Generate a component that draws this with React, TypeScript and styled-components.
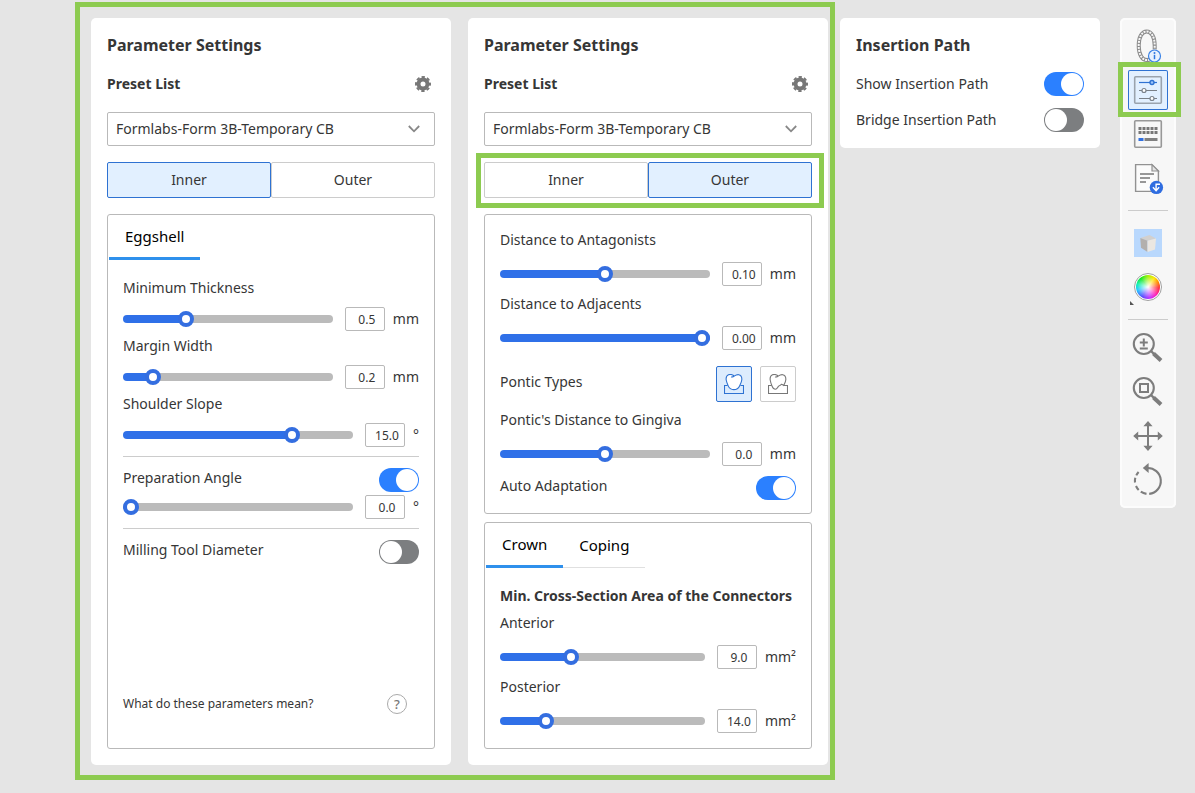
import React, { useId, useState } from "react";
import styled, { createGlobalStyle, css } from "styled-components";

const color = {
  page: "#e5e5e5",
  text: "#363636",
  border: "#b9b9b9",
  softBorder: "#cccccc",
  blue: "#2e72d2",
  fill: "#2f70e8",
  toggle: "#2b80ff",
  tab: "#2f90ec",
  tint: "#e2f0ff",
  mark: "#8dcb50",
  icon: "#7d7d7d",
};

const GlobalStyle = createGlobalStyle`
  *, *::before, *::after { box-sizing: border-box; }
  body {
    margin: 0;
    background: ${color.page};
    color: ${color.text};
    font-family: "Noto Sans", "Open Sans", sans-serif;
    font-size: 14px;
    line-height: 22px;
  }
  button, input, select { font: inherit; color: inherit; margin: 0; }
`;

const Page = styled.main`
  display: flex;
  align-items: flex-start;
  padding: 2px 19px 13px 75px;
`;

const Frame = styled.section`
  flex: 1;
  display: flex;
  gap: 17px;
  padding: 11px 2px 10px 11px;
  border: 5px solid ${color.mark};
`;

const Card = styled.section`
  display: flex;
  flex-direction: column;
  gap: 16px;
  padding: 16px;
  border-radius: 5px;
  background: #fff;
`;

const Panel = styled(Card)`
  flex: 1;
  min-width: 0;
`;

const PathCard = styled(Card)`
  width: 260px;
  margin: 16px 20px 0 5px;
`;

const Title = styled.h2`
  margin: 0;
  font-size: 16px;
  font-weight: 700;
`;

const Subtitle = styled.h3`
  margin: 0;
  font-size: 14px;
  font-weight: 700;
`;

const PresetRow = styled.div`
  display: flex;
  align-items: center;
  justify-content: space-between;
  height: 24px;
`;

const IconButton = styled.button`
  display: grid;
  place-items: center;
  width: 24px;
  height: 24px;
  padding: 0;
  border: 0;
  background: none;
`;

const SelectWrap = styled.div`
  display: grid;
  align-items: center;
  svg {
    grid-area: 1 / 1;
    justify-self: end;
    margin-right: 15px;
    pointer-events: none;
  }
`;

const Select = styled.select`
  grid-area: 1 / 1;
  appearance: none;
  width: 100%;
  height: 34px;
  padding: 0 32px 0 8px;
  border: 1px solid ${color.border};
  border-radius: 2px;
  background: #fff;
`;

const Segments = styled.div`
  position: relative;
  display: flex;
`;

const Segment = styled.button<{ $active: boolean }>`
  flex: 1;
  height: 36px;
  border: 1px solid ${(p) => (p.$active ? color.blue : color.softBorder)};
  border-radius: 2px;
  background: ${(p) => (p.$active ? color.tint : "#fff")};
`;

const Mark = styled.span<{ $inset: string }>`
  position: absolute;
  inset: ${(p) => p.$inset};
  border: 5px solid ${color.mark};
  pointer-events: none;
`;

const Boxes = styled.div`
  flex: 1;
  display: flex;
  flex-direction: column;
  gap: 8px;
`;

const Box = styled.div<{ $grow?: boolean }>`
  display: flex;
  flex-direction: column;
  flex: ${(p) => (p.$grow ? 1 : "none")};
  padding: 1px;
  border: 1px solid ${color.border};
  border-radius: 3px;
`;

const Tabs = styled.div`
  display: flex;
  height: 44px;
`;

const Tab = styled.button<{ $active?: boolean }>`
  padding: 0 16px 2px;
  border: 0;
  border-bottom: ${(p) => (p.$active ? `3px solid ${color.tab}` : "1px solid #e0e0e0")};
  background: none;
  color: #000;
  font-size: 15px;
`;

const Body = styled.div<{ $pad: string }>`
  flex: 1;
  display: flex;
  flex-direction: column;
  padding: ${(p) => p.$pad};
`;

const FieldList = styled.div<{ $loose?: boolean }>`
  display: flex;
  flex-direction: column;
  gap: ${(p) => (p.$loose ? 7 : 4)}px;
  > div { gap: ${(p) => (p.$loose ? 11 : 8)}px; }
`;

const FieldGroup = styled.div`
  display: flex;
  flex-direction: column;
`;

const Section = styled.div`
  display: flex;
  flex-direction: column;
  gap: 3px;
  padding: 11px 0 9px;
  border-top: 1px solid ${color.softBorder};
  &:first-of-type { margin-top: 9px; }
`;

const SliderRow = styled.div`
  display: flex;
  align-items: center;
  height: 24px;
`;

const Range = styled.input`
  appearance: none;
  flex: 1;
  min-width: 0;
  height: 16px;
  margin-right: 12px;
  background: none;
  &::-webkit-slider-runnable-track {
    height: 8px;
    border-radius: 4px;
    background: linear-gradient(${color.fill}, ${color.fill}) left / var(--filled) 100% no-repeat #bbbbbb;
  }
  &::-webkit-slider-thumb {
    appearance: none;
    width: 16px;
    height: 16px;
    margin-top: -4px;
    border: 4px solid #346ee0;
    border-radius: 50%;
    background: #fff;
  }
`;

const NumberBox = styled.input`
  width: 40px;
  height: 24px;
  margin-right: 8px;
  padding: 1px 0 0 4px;
  border: 1px solid ${color.border};
  border-radius: 2px;
  background: #fff;
  font-size: 12px;
  text-align: center;
`;

const ControlRow = styled.div<{ $plain?: boolean }>`
  display: flex;
  align-items: center;
  justify-content: space-between;
  ${(p) => !p.$plain && css`
    > :first-child { padding-bottom: 4px; margin: -2px 0; }
  `}
`;

const Rows = styled.div`
  display: flex;
  flex-direction: column;
  gap: 12px;
`;

const Switch = styled.input`
  appearance: none;
  display: flex;
  width: 40px;
  height: 24px;
  padding: 1px;
  border-radius: 12px;
  background: #7c7e80;
  &::before {
    content: "";
    width: 22px;
    height: 22px;
    border-radius: 50%;
    background: #fff;
  }
  &:checked { justify-content: flex-end; background: ${color.toggle}; }
`;

const Choices = styled.div`
  display: flex;
  gap: 8px;
`;

const Choice = styled.button<{ $active?: boolean }>`
  display: grid;
  place-items: center;
  width: 36px;
  height: 36px;
  padding: 0;
  border: 1px solid ${(p) => (p.$active ? color.blue : color.softBorder)};
  border-radius: 2px;
  background: ${(p) => (p.$active ? "#ddecfd" : "#fff")};
  color: ${(p) => (p.$active ? color.blue : "#777")};
`;

const PonticRow = styled(ControlRow)`
  margin: 16px 0 7px;
`;

const AutoRow = styled(ControlRow)`
  margin-top: 10px;
`;

const HelpRow = styled.div`
  display: flex;
  align-items: center;
  justify-content: space-between;
  margin-top: auto;
  padding-right: 12px;
  font-size: 12px;
`;

const HelpButton = styled.button`
  width: 20px;
  height: 20px;
  padding: 0;
  border: 1px solid #aaaaaa;
  border-radius: 50%;
  background: #fff;
  color: #777;
  font-size: 13px;
  font-weight: 500;
  line-height: 18px;
`;

const Toolbar = styled.nav`
  display: flex;
  flex-direction: column;
  gap: 4px;
  width: 56px;
  margin-top: 16px;
  padding: 8px 8px 9px;
  border-radius: 5px;
  background: #f7f7f7;
  box-shadow: inset 0 0 0 2px #fcfcfc;
`;

const Tool = styled.button<{ $active?: boolean }>`
  position: relative;
  display: grid;
  place-items: center;
  width: 40px;
  height: 40px;
  padding: 0;
  border: 0;
  border-radius: 2px;
  background: ${(p) => (p.$active ? "#e2f0ff" : "none")};
  box-shadow: ${(p) => (p.$active ? `inset 0 0 0 1px ${color.blue}` : "none")};
`;

const Rule = styled.hr<{ $tight?: boolean }>`
  width: 40px;
  height: 1px;
  margin: 8px 0 ${(p) => (p.$tight ? 3 : 8)}px;
  border: 0;
  background: #cccccc;
`;

const Wheel = styled.span`
  width: 28px;
  height: 28px;
  border: 1px solid #a0a0a0;
  border-radius: 50%;
  padding: 1px;
  background:
    radial-gradient(circle, #fff 0, #ffffff00 66%) content-box,
    conic-gradient(#a4f000, #ffe600 35deg, #ff8a00 65deg, #ff2a3c 95deg, #ff20b8 135deg, #c030ff 170deg, #5a4cff 210deg, #20c8ff 255deg, #10f0b0 285deg, #10e820 320deg, #a4f000) content-box,
    #fff;
`;

const Corner = styled.span`
  position: absolute;
  left: 2px;
  bottom: 2px;
  border: 2px solid transparent;
  border-left-color: #555;
  border-bottom-color: #555;
`;

function Gear() {
  return (
    <svg width="16" height="16" viewBox="0 0 16 16" fill="none" stroke="#777" aria-hidden="true">
      <circle cx="8" cy="8" r="4.5" strokeWidth="4" />
      <circle cx="8" cy="8" r="7" strokeWidth="2" strokeDasharray="3.3 2.2" strokeDashoffset="1.65" />
    </svg>
  );
}

function Chevron() {
  return (
    <svg width="12" height="8" viewBox="0 0 12 8" fill="none" stroke="#888" strokeWidth="1.8" aria-hidden="true">
      <path d="M.8 1 6 6.3 11.2 1" />
    </svg>
  );
}

function ToothOnGum() {
  return (
    <svg width="20" height="20" viewBox="0 0 20 20" fill="none" stroke="currentColor" strokeWidth="1.1" aria-hidden="true">
      <path d="M3.6 11.5H.5v8h19v-8h-3.1" />
      <path
        fill="#fff"
        d="M10 1.8C8.300.6 6 .2 4.500.7 2.400 1.500 1.900 3.800 2.200 6c.4 2.300 1.200 4 2 5.900 1 2.400 2.800 3.700 5.600 3.700s4.700-1.300 5.800-3.700c.9-2 2-3.900 2.200-6.200C18 3 16.800 1.100 14.700.7c-2-.3-3.300.6-4.700 1.500C9 2.900 8 3.200 7 3"
      />
    </svg>
  );
}

function ToothInGum() {
  return (
    <svg width="20" height="20" viewBox="0 0 20 20" fill="none" stroke="currentColor" strokeWidth="1.1" aria-hidden="true">
      <path d="M3.800 11.500H.5v8h19v-8h-3.700" />
      <path d="M10 1.800C8.300.6 6 .2 4.500.7 2.400 1.500 1.900 3.800 2.200 6c.4 2.300 1 4.300 1.900 6.300.7 1.700 1.700 2.900 3.300 2.900 1.800 0 2-1.700 3-2.900 1-1.100 2.300-.6 3-2 .7-.2 1.200.4 2.300 1.200.9-2 1.900-3.600 2.100-5.800C18 3 16.800 1.100 14.700.7c-2-.3-3.300.6-4.700 1.500C9 2.900 8 3.200 7 3" />
    </svg>
  );
}

const archPath = "M22 33.500C13.500 36.500 10.700 27 10.700 19.500 10.700 11 14 5.500 18.700 5.500S26.700 11 26.700 19.500v4";

function ArchIcon() {
  return (
    <svg width="40" height="40" viewBox="0 0 40 40" fill="none" aria-hidden="true">
      <path d={archPath} stroke="#8b8b8b" strokeWidth="4" />
      <path d={archPath} stroke="#f7f7f7" strokeWidth="2" strokeDasharray="2 1" />
      <circle cx="26.5" cy="30" r="6" fill="#e8f2fe" stroke="#3b83e6" strokeWidth="1.2" />
      <path d="M26.5 28.800v4.400" stroke="#2e78e0" strokeWidth="1.5" />
      <circle cx="26.5" cy="26.900" r="1" fill="#2e78e0" />
    </svg>
  );
}

function SlidersIcon() {
  return (
    <svg width="40" height="40" viewBox="0 0 40 40" fill="none" aria-hidden="true">
      <rect x="6.7" y="6.7" width="26.6" height="26.6" rx="1" stroke="#9aa3ad" strokeWidth="1.6" />
      <path d="M11 12.500h18" stroke="#2e72d2" strokeWidth="1.200" />
      <path d="M11 20.500h18M11 28.500h18" stroke="#7a8087" strokeWidth="1.200" />
      <circle cx="24" cy="12.5" r="2" fill="#9cc4fb" stroke="#2e72d2" strokeWidth="1.4" />
      <circle cx="16" cy="20.5" r="2" fill="#fff" stroke="#7c838b" strokeWidth="1.2" />
      <circle cx="24" cy="28.5" r="2" fill="#fff" stroke="#7c838b" strokeWidth="1.2" />
    </svg>
  );
}

function KeyboardIcon() {
  return (
    <svg width="40" height="40" viewBox="0 0 40 40" fill="none" aria-hidden="true">
      <rect x="6.7" y="6.7" width="26.6" height="26.6" rx="1" stroke="#989898" strokeWidth="1.6" />
      <path d="M10.500 14.500h19M10.500 18.500h19" stroke="#777" strokeWidth="3" strokeDasharray="3 1" />
      <path d="M10.500 25.500h5" stroke="#2f6fe0" strokeWidth="3" />
      <path d="M16.500 25.500h13" stroke="#808080" strokeWidth="3" />
    </svg>
  );
}

function ReportIcon() {
  return (
    <svg width="40" height="40" viewBox="0 0 40 40" fill="none" aria-hidden="true">
      <path d="M24 6.600H7.600v26.800h22.800V13z" fill="#fbfbfb" stroke="#929292" strokeWidth="1.4" />
      <path d="M24 6.600V13h6.400z" fill="#e4e4e4" stroke="#929292" strokeWidth="1.200" />
      <path d="M12 16h14M12 20h10M12 24h6" stroke="#777" strokeWidth="1.5" />
      <circle cx="28.4" cy="29.4" r="6.7" fill="#2f6de0" />
      <path d="M32 26.300h-3.900v6.300M24.900 29.300l3.200 3.500 3-3.500" stroke="#fff" strokeWidth="1.4" />
    </svg>
  );
}

function CubeIcon() {
  return (
    <svg width="40" height="40" viewBox="0 0 40 40" aria-hidden="true">
      <path d="M6 6h28v28H6z" fill="#b9d8fd" />
      <path d="M12.300 15 21.500 12 28 15.500 19.500 18z" fill="#d2d0ce" />
      <path d="M12.300 15 19.500 17.800V29L13 24.800z" fill="#b3b0ad" />
      <path d="M19.500 17.800 28 15.500l-1 11L19.500 29z" fill="#ebe7e1" />
    </svg>
  );
}

function Lens() {
  return (
    <>
      <circle cx="15.8" cy="17" r="10" strokeWidth="2.1" />
      <path d="M23 24l3 3" strokeWidth="2.4" />
      <path d="M25.500 26.500l7.500 7" strokeWidth="4" />
    </>
  );
}

function ZoomIcon() {
  return (
    <svg width="40" height="40" viewBox="0 0 40 40" fill="none" stroke={color.icon} aria-hidden="true">
      <Lens />
      <path d="M11.800 15.500h8M15.800 11.500v8M11.800 21.500h8" strokeWidth="2" />
    </svg>
  );
}

function ZoomFitIcon() {
  return (
    <svg width="40" height="40" viewBox="0 0 40 40" fill="none" stroke={color.icon} aria-hidden="true">
      <Lens />
      <path d="M12 13h8v8h-8z" strokeWidth="2" />
    </svg>
  );
}

function PanIcon() {
  return (
    <svg width="40" height="40" viewBox="0 0 40 40" aria-hidden="true">
      <path d="M20 10v22M9 21h22" stroke={color.icon} strokeWidth="2" />
      <path d="M20 6l4.600 5.200h-9.200zM20 36l4.600-5.200h-9.200zM5.200 21l5-4.600v9.200zM34.800 21l-5-4.600v9.200z" fill={color.icon} />
    </svg>
  );
}

function RotateIcon() {
  return (
    <svg width="40" height="40" viewBox="0 0 40 40" fill="none" stroke={color.icon} aria-hidden="true">
      <path d="M19 9a13 13 0 0 1 2.200 25.900" strokeWidth="2.1" />
      <path d="M18.500 34.900A13 13 0 0 1 12.800 32.600M10.700 30.900A13 13 0 0 1 8 27M7 23.500a13 13 0 0 1 .3-4.800M8.300 16.400a13 13 0 0 1 2.300-3.400" strokeWidth="2.1" />
      <path d="M14.800 8.900l5.800-5v10z" fill={color.icon} stroke="none" />
    </svg>
  );
}

interface SliderProps {
  name: string;
  value: string;
  at: number;
  unit: string;
}

function Slider({ name, value, at, unit, id }: SliderProps & { id?: string }) {
  const [pos, setPos] = useState(at);
  const filled = { "--filled": `${pos / 10}%` } as React.CSSProperties;
  return (
    <SliderRow>
      <Range
        id={id}
        aria-label={id ? undefined : name}
        type="range"
        min={0}
        max={1000}
        value={pos}
        style={filled}
        onChange={(e) => setPos(Number(e.target.value))}
      />
      <NumberBox aria-label={`${name} value`} defaultValue={value} inputMode="decimal" />
      <span>{unit}</span>
    </SliderRow>
  );
}

function Field(props: SliderProps) {
  const id = useId();
  return (
    <FieldGroup>
      <label htmlFor={id}>{props.name}</label>
      <Slider {...props} id={id} />
    </FieldGroup>
  );
}

function Toggle({ name, on, plain }: { name: string; on?: boolean; plain?: boolean }) {
  const id = useId();
  return (
    <ControlRow $plain={plain}>
      <label htmlFor={id}>{name}</label>
      <Switch id={id} type="checkbox" role="switch" defaultChecked={on} />
    </ControlRow>
  );
}

function Settings({ active, marked, children }: { active: string; marked?: boolean; children: React.ReactNode }) {
  return (
    <Panel>
      <Title>Parameter Settings</Title>
      <PresetRow>
        <Subtitle>Preset List</Subtitle>
        <IconButton aria-label="Manage presets"><Gear /></IconButton>
      </PresetRow>
      <SelectWrap>
        <Select aria-label="Preset List">
          <option>Formlabs-Form 3B-Temporary CB</option>
        </Select>
        <Chevron />
      </SelectWrap>
      <Segments>
        {["Inner", "Outer"].map((name) => (
          <Segment key={name} $active={name === active} aria-pressed={name === active}>{name}</Segment>
        ))}
        {marked && <Mark $inset="-9px -12px -10px -8px" />}
      </Segments>
      <Boxes>{children}</Boxes>
    </Panel>
  );
}

const ConnectorTitle = styled(Subtitle)`
  margin-bottom: 5px;
`;

export default function App() {
  return (
    <>
      <GlobalStyle />
      <Page>
        <Frame>
          <Settings active="Inner">
            <Box $grow>
              <Tabs><Tab $active>Eggshell</Tab></Tabs>
              <Body $pad="17px 14px 32px">
                <FieldList>
                  <Field name="Minimum Thickness" value="0.5" at={284} unit="mm" />
                  <Field name="Margin Width" value="0.2" at={113} unit="mm" />
                  <Field name="Shoulder Slope" value="15.0" at={752} unit="°" />
                </FieldList>
                <FieldGroup>
                  <Section>
                    <Toggle name="Preparation Angle" on />
                    <Slider name="Preparation Angle" value="0.0" at={0} unit="°" />
                  </Section>
                  <Section>
                    <Toggle name="Milling Tool Diameter" />
                  </Section>
                </FieldGroup>
                <HelpRow>
                  <span>What do these parameters mean?</span>
                  <HelpButton aria-label="Help">?</HelpButton>
                </HelpRow>
              </Body>
            </Box>
          </Settings>

          <Settings active="Outer" marked>
            <Box>
              <Body $pad="13px 14px 12px">
                <FieldList $loose>
                  <Field name="Distance to Antagonists" value="0.10" at={500} unit="mm" />
                  <Field name="Distance to Adjacents" value="0.00" at={1000} unit="mm" />
                </FieldList>
                <PonticRow>
                  <span>Pontic Types</span>
                  <Choices role="group" aria-label="Pontic Types">
                    <Choice $active aria-label="Pontic on gingiva" aria-pressed><ToothOnGum /></Choice>
                    <Choice aria-label="Pontic in gingiva"><ToothInGum /></Choice>
                  </Choices>
                </PonticRow>
                <FieldList $loose>
                  <Field name="Pontic's Distance to Gingiva" value="0.0" at={500} unit="mm" />
                </FieldList>
                <AutoRow>
                  <label htmlFor="auto">Auto Adaptation</label>
                  <Switch id="auto" type="checkbox" role="switch" defaultChecked />
                </AutoRow>
              </Body>
            </Box>
            <Box>
              <Tabs>
                <Tab $active>Crown</Tab>
                <Tab>Coping</Tab>
              </Tabs>
              <Body $pad="17px 14px 14px">
                <ConnectorTitle>Min. Cross-Section Area of the Connectors</ConnectorTitle>
                <FieldList $loose>
                  <Field name="Anterior" value="9.0" at={333} unit="mm²" />
                  <Field name="Posterior" value="14.0" at={200} unit="mm²" />
                </FieldList>
              </Body>
            </Box>
          </Settings>
        </Frame>

        <PathCard>
          <Title>Insertion Path</Title>
          <Rows>
            <Toggle name="Show Insertion Path" on plain />
            <Toggle name="Bridge Insertion Path" plain />
          </Rows>
        </PathCard>

        <Toolbar aria-label="View tools">
          <Tool aria-label="Arch information"><ArchIcon /></Tool>
          <Tool aria-label="Parameter settings" $active>
            <SlidersIcon />
            <Mark $inset="-8px -13px -7px -10px" />
          </Tool>
          <Tool aria-label="Keyboard shortcuts"><KeyboardIcon /></Tool>
          <Tool aria-label="Report"><ReportIcon /></Tool>
          <Rule />
          <Tool aria-label="Model view"><CubeIcon /></Tool>
          <Tool aria-label="Colour"><Wheel /><Corner /></Tool>
          <Rule $tight />
          <Tool aria-label="Zoom"><ZoomIcon /></Tool>
          <Tool aria-label="Zoom to fit"><ZoomFitIcon /></Tool>
          <Tool aria-label="Pan"><PanIcon /></Tool>
          <Tool aria-label="Rotate"><RotateIcon /></Tool>
        </Toolbar>
      </Page>
    </>
  );
}
